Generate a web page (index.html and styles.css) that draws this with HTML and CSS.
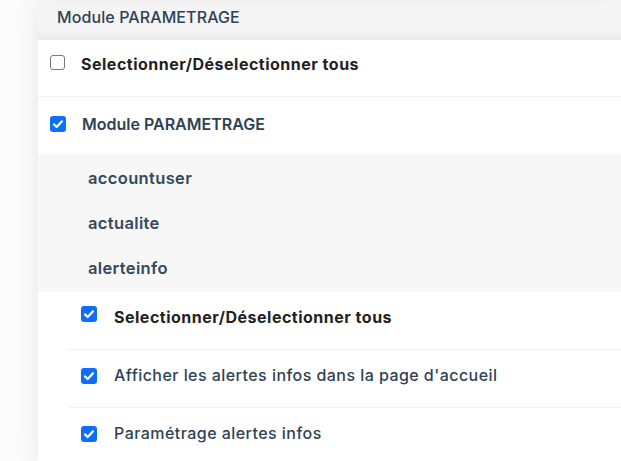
FILE: index.html
```html
<!DOCTYPE html>
<html lang="fr">
<head>
<meta charset="utf-8">
<title>Module PARAMETRAGE</title>
<link rel="stylesheet" href="styles.css">
</head>
<body>
<div class="wrap">
  <div class="panel">
    <div class="header">Module PARAMETRAGE</div>
    <div class="row row-all">
      <span class="cb"></span>
      <span class="label bold">Selectionner/Déselectionner tous</span>
    </div>
    <div class="row row-module">
      <span class="cb checked"><svg viewBox="0 0 16 16"><path d="M4 8.4l2.7 2.6L12 5.3" /></svg></span>
      <span class="label module">Module PARAMETRAGE</span>
    </div>
    <div class="sub">
      <div class="item">accountuser</div>
      <div class="item">actualite</div>
      <div class="item">alerteinfo</div>
    </div>
    <div class="perms">
      <div class="prow prow-all">
        <span class="cb checked"><svg viewBox="0 0 16 16"><path d="M4 8.4l2.7 2.6L12 5.3" /></svg></span>
        <span class="label bold">Selectionner/Déselectionner tous</span>
      </div>
      <div class="prow">
        <span class="cb checked"><svg viewBox="0 0 16 16"><path d="M4 8.4l2.7 2.6L12 5.3" /></svg></span>
        <span class="label perm">Afficher les alertes infos dans la page d'accueil</span>
      </div>
      <div class="prow">
        <span class="cb checked"><svg viewBox="0 0 16 16"><path d="M4 8.4l2.7 2.6L12 5.3" /></svg></span>
        <span class="label perm">Paramétrage alertes infos</span>
      </div>
    </div>
  </div>
</div>
</body>
</html>
```

FILE: styles.css
```css
html, body {
  margin: 0;
  padding: 0;
  background: #fbfbfb;
  font-family: Inter, "Noto Sans", sans-serif;
  overflow: hidden;
}
.wrap {
  padding: 3px 0 0 38px;
  height: 458px;
}
.panel {
  background: #fff;
  box-shadow: 0 0 22px rgba(0, 0, 0, 0.09);
  height: 100%;
  width: 583px;
  overflow: hidden;
}
.header {
  height: 37px;
  box-sizing: border-box;
  padding: 4px 0 0 19px;
  line-height: 20px;
  background: linear-gradient(#f4f4f4 0, #f4f4f4 75%, #ebebeb 100%);
  color: #2f4254;
  font-size: 16px;
  font-weight: 500;
  letter-spacing: 0.1px;
}
.row {
  display: flex;
  align-items: flex-start;
  box-sizing: border-box;
  padding-left: 12px;
  gap: 16px;
}
.row-all {
  height: 57px;
  padding-top: 14px;
  border-bottom: 1px solid #f0f0f0;
}
.row-all .cb {
  margin-top: 1px;
}
.row-module {
  height: 57px;
  padding-top: 17px;
}
.row-module .cb {
  margin-top: 2px;
}
.cb {
  width: 15px;
  height: 15px;
  box-sizing: border-box;
  border: 1.5px solid #777;
  border-radius: 3px;
  background: #fff;
  display: flex;
  flex: none;
}
.cb.checked {
  width: 16px;
  height: 16px;
  border: 0;
  background: #0d6efd;
}
.cb svg {
  width: 100%;
  height: 100%;
  fill: none;
  stroke: #fff;
  stroke-width: 2.2;
  stroke-linecap: round;
  stroke-linejoin: round;
}
.label {
  font-size: 16px;
  line-height: 20px;
  white-space: nowrap;
}
.bold {
  font-weight: 700;
  color: #222;
  letter-spacing: 0.5px;
}
.module {
  font-weight: 600;
  color: #2f4254;
  letter-spacing: 0;
}
.sub {
  background: #f7f7f7;
  padding: 1px 0 2px 50px;
}
.item {
  height: 45px;
  display: flex;
  align-items: center;
  font-size: 16.5px;
  font-weight: 600;
  color: #34495e;
  letter-spacing: 0.35px;
}
.perms {
  padding-left: 31px;
}
.prow {
  height: 58px;
  box-sizing: border-box;
  display: flex;
  align-items: flex-start;
  padding: 15px 0 0 12px;
  gap: 17px;
  border-bottom: 1px solid #f0f0f0;
}
.prow .cb {
  margin-top: 3px;
}
.prow-all .cb {
  margin-top: -1px;
}
.perm {
  font-weight: 500;
  color: #2f4254;
  letter-spacing: 0.45px;
}
```
